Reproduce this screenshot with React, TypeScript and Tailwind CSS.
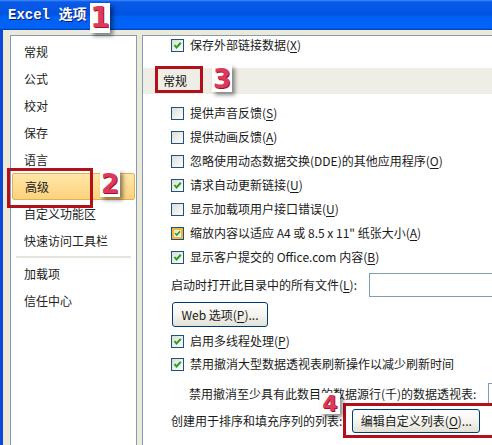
import React from "react";

const FONT = { fontFamily: '"Noto Sans CJK SC", "Noto Sans", sans-serif' };

function Box({ checked, hover }: { checked?: boolean; hover?: boolean }) {
  return (
    <span className="w-[13px] h-[13px] border border-[#1c5180] bg-gradient-to-br from-[#dcdcd5] to-white flex items-center justify-center shrink-0">
      <span
        className={
          "w-[11px] h-[11px] flex items-center justify-center " +
          (hover ? "border-2 border-[#f8b636]" : "")
        }
      >
        {checked && (
          <svg width="9" height="9" viewBox="0 0 9 9">
            <path d="M1.5 4 L3.5 6.5 L7.8 1.8" stroke="#21a121" strokeWidth="2" fill="none" />
          </svg>
        )}
      </span>
    </span>
  );
}

function U({ c }: { c: string }) {
  return <span className="underline underline-offset-2">{c}</span>;
}

function Row({
  checked,
  hover,
  children,
  cls,
}: {
  checked?: boolean;
  hover?: boolean;
  children: React.ReactNode;
  cls: string;
}) {
  return (
    <div className={"flex items-center gap-[6px] pl-[28px] text-[12px] leading-none text-[#1a1a1a] whitespace-nowrap " + cls}>
      <Box checked={checked} hover={hover} />
      <span>{children}</span>
    </div>
  );
}

function Digit({ d, cls }: { d: string; cls: string }) {
  return (
    <div
      className={
        "absolute bg-white flex items-center justify-center shadow-[3px_3px_4px_rgba(0,0,0,0.45)] text-[#dc3a5a] font-bold leading-none " +
        cls
      }
      style={{ fontFamily: '"DejaVu Sans", sans-serif', textShadow: "1px 1px 0 #a01030" }}
    >
      {d}
    </div>
  );
}

const leftItems = ["常规", "公式", "校对", "保存", "语言", "高级", "自定义功能区", "快速访问工具栏"];

export default function App() {
  return (
    <div className="w-[492px] h-[445px] overflow-hidden relative flex flex-col bg-[#ece9d8]" style={FONT}>
      {/* Title bar */}
      <div
        className="h-[30px] shrink-0 flex items-center pl-[8px] bg-[linear-gradient(to_bottom,#3d8dff_0px,#0a5ae8_2px,#0053e1_15px,#0061f5_17px,#0062f6_28px,#003cb0_30px)]"
      >
        <span
          className="text-white font-bold text-[14px] leading-none"
          style={{ fontFamily: '"Liberation Mono", "Noto Sans CJK SC", monospace', textShadow: "1px 1px 0 #0a1e70" }}
        >
          Excel 选项
        </span>
      </div>

      {/* Body */}
      <div className="flex-1 min-h-0 flex border-l-[3px] border-[#0a4ad8] pt-[5px] pl-[7px] gap-[5px]">
        {/* Left nav */}
        <div className="w-[127px] shrink-0 bg-white border border-b-0 border-[#7f9db9] flex flex-col pt-[2px] px-[1px]">
          {leftItems.map((t) => (
            <div
              key={t}
              className={
                "h-[27px] flex items-center pl-[12px] text-[12px] leading-none text-[#222] " +
                (t === "高级"
                  ? "bg-gradient-to-b from-[#ffe7a8] to-[#fdd27c] border border-[#e0b15a] rounded-[2px] pl-[11px]"
                  : "")
              }
            >
              {t}
            </div>
          ))}
          <div className="h-[2px] bg-[#e6e4dc] mx-[4px] my-[2px]" />
          {["加载项", "信任中心"].map((t) => (
            <div key={t} className="h-[27px] flex items-center pl-[12px] text-[12px] leading-none text-[#222]">
              {t}
            </div>
          ))}
        </div>

        {/* Right content */}
        <div className="flex-1 min-w-0 bg-white border border-r-0 border-b-0 border-[#7f9db9] flex flex-col overflow-hidden">
          <Row checked cls="h-[18px]">
            保存外部链接数据(<U c="X" />)
          </Row>
          <div className="mt-[14px] h-[26px] shrink-0 bg-[#eeede6] flex items-center pl-[20px] text-[12px] leading-none text-[#111]">
            常规
          </div>
          <Row cls="mt-[7px] h-[24px]">
            提供声音反馈(<U c="S" />)
          </Row>
          <Row cls="h-[24px]">
            提供动画反馈(<U c="A" />)
          </Row>
          <Row cls="h-[24px]">
            忽略使用动态数据交换(DDE)的其他应用程序(<U c="O" />)
          </Row>
          <Row checked cls="h-[24px]">
            请求自动更新链接(<U c="U" />)
          </Row>
          <Row cls="h-[24px]">
            显示加载项用户接口错误(<U c="U" />)
          </Row>
          <Row checked hover cls="h-[24px]">
            缩放内容以适应 A4 或 8.5 x 11" 纸张大小(<U c="A" />)
          </Row>
          <Row checked cls="h-[24px]">
            显示客户提交的 Office.com 内容(<U c="B" />)
          </Row>
          <div className="mt-[4px] h-[24px] shrink-0 flex items-center pl-[28px] text-[12px] leading-none text-[#1a1a1a] whitespace-nowrap">
            <span>
              启动时打开此目录中的所有文件(<U c="L" />):
            </span>
            <div className="ml-[12px] h-[24px] flex-1 border border-r-0 border-[#7f9db9] bg-white" />
          </div>
          <div className="mt-[5px] pl-[29px] shrink-0">
            <button className="w-[96px] h-[25px] rounded-[3px] border border-[#003c74] bg-gradient-to-b from-white via-[#f5f4ee] to-[#e3e2d8] text-[12px] leading-none text-[#1a1a1a] flex items-center justify-center">
              Web 选项(<U c="P" />)...
            </button>
          </div>
          <Row checked cls="mt-[3px] h-[22px]">
            启用多线程处理(<U c="P" />)
          </Row>
          <Row checked cls="mt-[1px] h-[22px]">
            禁用撤消大型数据透视表刷新操作以减少刷新时间
          </Row>
          <div className="mt-[8px] h-[22px] shrink-0 flex items-center pl-[46px] text-[12px] leading-none text-[#1a1a1a] whitespace-nowrap">
            <span>禁用撤消至少具有此数目的数据源行(千)的数据透视表:</span>
            <div className="ml-[12px] h-[22px] w-[60px] shrink-0 border border-[#7f9db9] bg-white flex items-center pl-[3px]">
              3
            </div>
          </div>
          <div className="mt-[4px] h-[24px] shrink-0 flex items-center pl-[28px] text-[12px] leading-none text-[#1a1a1a] whitespace-nowrap">
            <span>创建用于排序和填充序列的列表:</span>
            <button className="ml-[10px] w-[128px] h-[24px] shrink-0 rounded-[3px] border border-[#003c74] bg-gradient-to-b from-white via-[#f5f4ee] to-[#e3e2d8] text-[12px] leading-none text-[#1a1a1a] flex items-center justify-center">
              编辑自定义列表(<U c="O" />)...
            </button>
          </div>
        </div>
      </div>

      {/* Annotations */}
      <div className="absolute left-[7px] top-[168px] w-[86px] h-[40px] border-[3px] border-[#b3101a]" />
      <div className="absolute left-[155px] top-[66px] w-[48px] h-[27px] border-[3px] border-[#b3101a]" />
      <div className="absolute left-[343px] top-[403px] w-[152px] h-[35px] border-[3px] border-[#b3101a]" />
      <Digit d="1" cls="left-[90px] top-[3px] w-[20px] h-[30px] text-[28px]" />
      <Digit d="2" cls="left-[100px] top-[170px] w-[20px] h-[27px] text-[26px]" />
      <Digit d="3" cls="left-[212px] top-[65px] w-[20px] h-[27px] text-[26px]" />
      <Digit d="4" cls="left-[320px] top-[393px] w-[20px] h-[21px] text-[22px]" />
    </div>
  );
}
